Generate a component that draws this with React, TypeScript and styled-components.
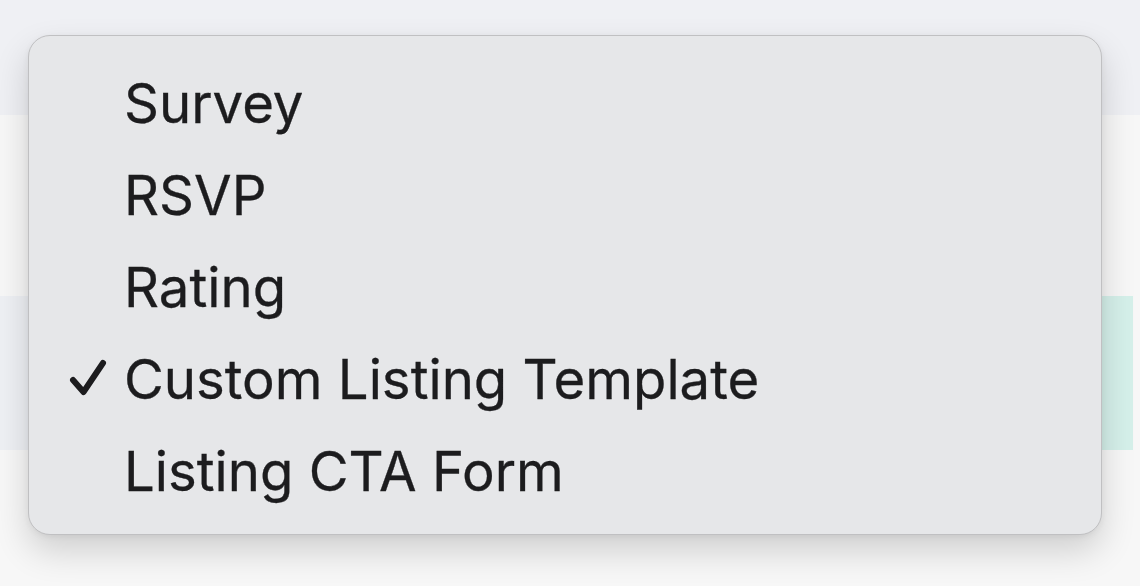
import React from "react";
import styled, { createGlobalStyle } from "styled-components";

const Global = createGlobalStyle`
  html, body { margin: 0; padding: 0; }
  body {
    width: 1140px;
    height: 586px;
    overflow: hidden;
    background: #f7f7f7;
    font-family: Inter, "Noto Sans", "Liberation Sans", sans-serif;
  }
`;

const Page = styled.div`
  position: relative;
  width: 1140px;
  height: 586px;
  display: flex;
  flex-direction: column;
`;

const Header = styled.div`
  height: 115px;
  background: #eff0f4;
  flex: none;
`;

const Body = styled.div`
  padding-top: 181px;
  display: flex;
  flex-direction: column;
`;

const Row = styled.div`
  height: 154px;
  width: 1133px;
  display: grid;
  grid-template-columns: 560px 1fr;
`;

const Cell = styled.div<{ $tone: "gray" | "mint" }>`
  background: ${(p) => (p.$tone === "mint" ? "#d5f0ea" : "#eef0f4")};
`;

const Menu = styled.div`
  position: absolute;
  left: 28px;
  top: 35px;
  width: 1074px;
  box-sizing: border-box;
  padding: 21px 0 17px;
  background: #e6e7e9;
  border: 1px solid #c0c0c2;
  border-radius: 22px;
  box-shadow: 0 16px 34px rgba(0, 0, 0, 0.16), 0 2px 6px rgba(0, 0, 0, 0.06);
  display: flex;
  flex-direction: column;
`;

const Item = styled.div`
  display: flex;
  align-items: center;
  height: 92px;
  font-size: 54.5px;
  line-height: 92px;
  color: #1c1c1e;
  -webkit-text-stroke: 0.3px #1c1c1e;
`;

const CheckSlot = styled.span`
  width: 95px;
  flex: none;
  display: flex;
  justify-content: flex-end;
  padding-right: 16px;
  box-sizing: border-box;
`;

const Label = styled.span``;

const Check = () => (
  <svg width="40" height="40" viewBox="0 0 40 40">
    <path
      d="M5 21 L15.5 33 L35 4"
      fill="none"
      stroke="#1c1c1e"
      strokeWidth="6"
      strokeLinecap="round"
      strokeLinejoin="round"
    />
  </svg>
);

const items = [
  { label: "Survey", checked: false },
  { label: "RSVP", checked: false },
  { label: "Rating", checked: false },
  { label: "Custom Listing Template", checked: true },
  { label: "Listing CTA Form", checked: false },
];

export default function App() {
  return (
    <>
      <Global />
      <Page>
        <Header />
        <Body>
          <Row>
            <Cell $tone="gray" />
            <Cell $tone="mint" />
          </Row>
        </Body>
        <Menu>
          {items.map((it) => (
            <Item key={it.label}>
              <CheckSlot>{it.checked && <Check />}</CheckSlot>
              <Label>{it.label}</Label>
            </Item>
          ))}
        </Menu>
      </Page>
    </>
  );
}
